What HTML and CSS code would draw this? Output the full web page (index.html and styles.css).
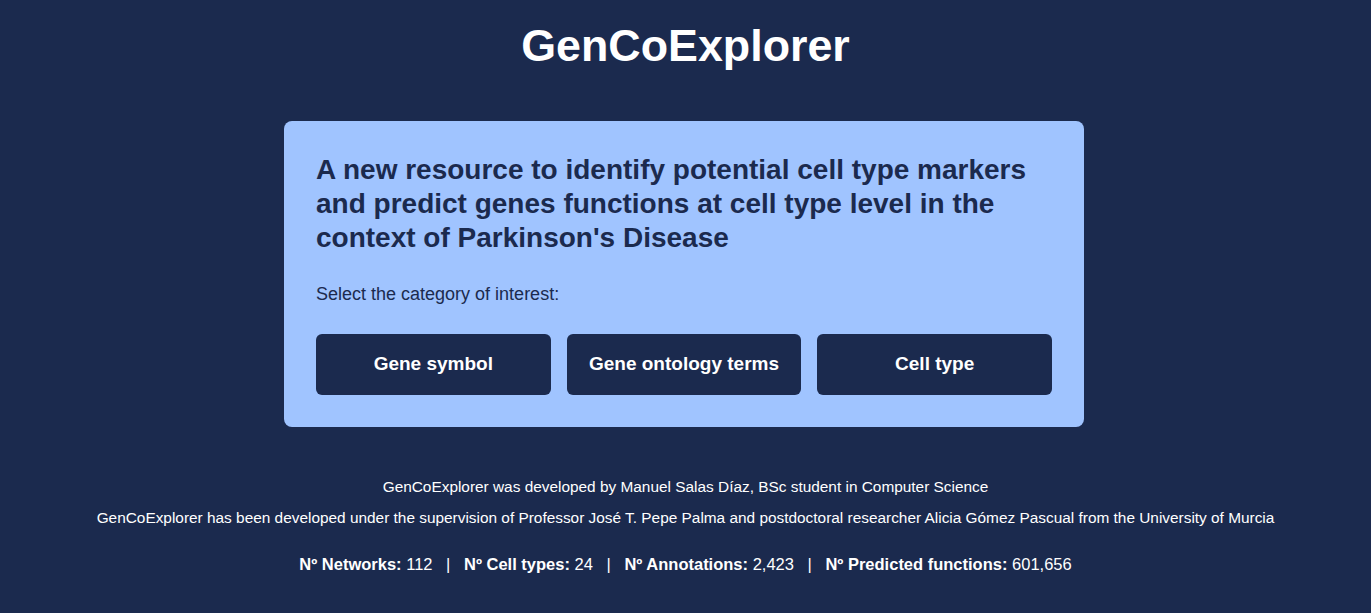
FILE: index.html
```html
<!DOCTYPE html>
<html lang="en">
<head>
<meta charset="utf-8">
<title>GenCoExplorer</title>
<link rel="stylesheet" href="styles.css">
</head>
<body>
<header class="header">
  <h1 class="title">GenCoExplorer</h1>
</header>
<main class="main">
  <section class="card">
    <h2 class="card-title">A new resource to identify potential cell type markers and predict genes functions at cell type level in the context of Parkinson's Disease</h2>
    <p class="card-text">Select the category of interest:</p>
    <div class="buttons">
      <button class="btn">Gene symbol</button>
      <button class="btn">Gene ontology terms</button>
      <button class="btn">Cell type</button>
    </div>
  </section>
</main>
<footer class="footer">
  <p class="credit">GenCoExplorer was developed by Manuel Salas Díaz, BSc student in Computer Science</p>
  <p class="credit">GenCoExplorer has been developed under the supervision of Professor José T. Pepe Palma and postdoctoral researcher Alicia Gómez Pascual from the University of Murcia</p>
  <p class="stats"><b>Nº Networks:</b> 112 <span class="sep">|</span> <b>Nº Cell types:</b> 24 <span class="sep">|</span> <b>Nº Annotations:</b> 2,423 <span class="sep">|</span> <b>Nº Predicted functions:</b> 601,656</p>
</footer>
</body>
</html>
```
FILE: styles.css
```css
* { box-sizing: border-box; }
html, body { margin: 0; padding: 0; }
body {
  background: #1b2a4e;
  color: #ffffff;
  font-family: "Liberation Sans", Arial, sans-serif;
  min-height: 613px;
}
.header {
  display: flex;
  justify-content: center;
  padding-top: 18px;
}
.title {
  margin: 0;
  font-size: 44.8px;
  line-height: 54px;
  font-weight: 700;
}
.main {
  display: flex;
  justify-content: center;
  padding-top: 49px;
  padding-right: 3px;
}
.card {
  width: 800px;
  background: #a0c4ff;
  border-radius: 8px;
  padding: 32px;
  color: #1b2a4e;
}
.card-title {
  margin: 0;
  font-size: 28px;
  line-height: 34px;
  font-weight: 700;
}
.card-text {
  margin: 0;
  padding-top: 27px;
  font-size: 18px;
  line-height: 24px;
}
.buttons {
  display: grid;
  grid-template-columns: repeat(3, 1fr);
  gap: 16px;
  margin-top: 28px;
}
.btn {
  height: 61px;
  border: none;
  border-radius: 6px;
  padding: 0 0 2px;
  background: #1b2a4e;
  color: #ffffff;
  font-family: "Liberation Sans", Arial, sans-serif;
  font-size: 19px;
  font-weight: 700;
}
.footer {
  display: flex;
  flex-direction: column;
  align-items: center;
  padding-top: 51px;
  font-size: 15.4px;
}
.credit {
  margin: 0 0 13px;
  line-height: 18px;
}
.stats {
  margin: 14px 0 0;
  font-size: 16.5px;
  line-height: 20px;
}
.sep { margin: 0 9px; }
```
